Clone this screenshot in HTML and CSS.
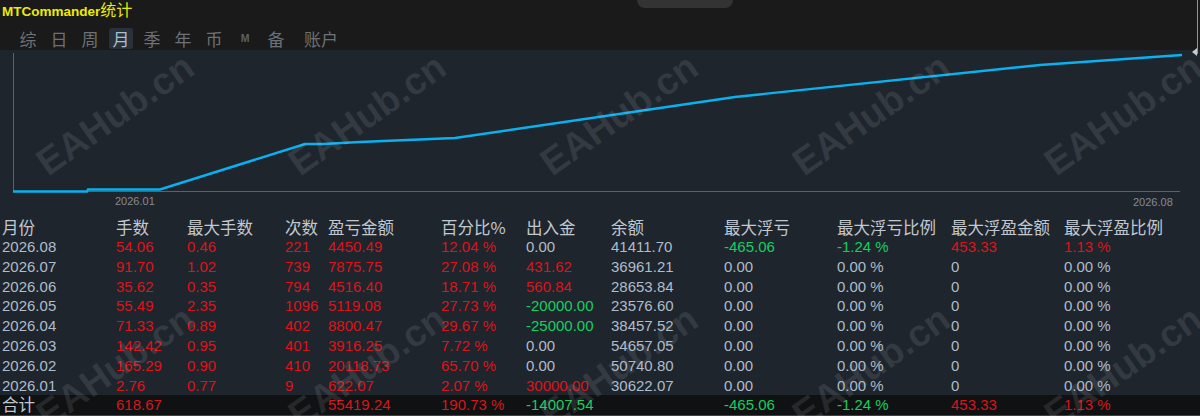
FILE: index.html
```html
<!DOCTYPE html>
<html>
<head>
<meta charset="utf-8">
<link rel="stylesheet" href="styles.css">
</head>
<body>
<div class="app">
  <div class="top">
    <div class="title">MTCommander<span class="cjk">统计</span></div>
    <div class="tabs">
      <span class="tab">综</span>
      <span class="tab">日</span>
      <span class="tab">周</span>
      <span class="tab active">月</span>
      <span class="tab">季</span>
      <span class="tab">年</span>
      <span class="tab">币</span>
      <span class="tab tab-m">M</span>
      <span class="tab">备</span>
      <span class="tab tab-wide">账户</span>
    </div>
  </div>
  <div class="chart">
    <svg class="chart-svg" width="1200" height="167" viewBox="0 50 1200 167">
      <line x1="13.5" y1="53" x2="13.5" y2="192" class="axis"/>
      <line x1="13" y1="191.5" x2="1180" y2="191.5" class="axis"/>
      <polyline class="curve" points="13,191.5 87,191.5 88,189.5 160,189.5 305,144 323,144 360,142 455,138 735,97 1040,65 1182,55"/>
      <text x="115" y="205" class="lbl">2026.01</text>
      <text x="1133" y="206" class="lbl">2026.08</text>
    </svg>
  </div>
  <div class="table">
    <div class="row head">
      <span>月份</span><span>手数</span><span>最大手数</span><span>次数</span><span>盈亏金额</span><span>百分比%</span><span>出入金</span><span>余额</span><span>最大浮亏</span><span>最大浮亏比例</span><span>最大浮盈金额</span><span>最大浮盈比例</span>
    </div>
    <div class="row">
      <span class="g">2026.08</span><span class="r">54.06</span><span class="r">0.46</span><span class="r">221</span><span class="r">4450.49</span><span class="r">12.04 %</span><span class="g">0.00</span><span class="g">41411.70</span><span class="gr">-465.06</span><span class="gr">-1.24 %</span><span class="r">453.33</span><span class="r">1.13 %</span>
    </div>
    <div class="row">
      <span class="g">2026.07</span><span class="r">91.70</span><span class="r">1.02</span><span class="r">739</span><span class="r">7875.75</span><span class="r">27.08 %</span><span class="r">431.62</span><span class="g">36961.21</span><span class="g">0.00</span><span class="g">0.00 %</span><span class="g">0</span><span class="g">0.00 %</span>
    </div>
    <div class="row">
      <span class="g">2026.06</span><span class="r">35.62</span><span class="r">0.35</span><span class="r">794</span><span class="r">4516.40</span><span class="r">18.71 %</span><span class="r">560.84</span><span class="g">28653.84</span><span class="g">0.00</span><span class="g">0.00 %</span><span class="g">0</span><span class="g">0.00 %</span>
    </div>
    <div class="row">
      <span class="g">2026.05</span><span class="r">55.49</span><span class="r">2.35</span><span class="r">1096</span><span class="r">5119.08</span><span class="r">27.73 %</span><span class="gr">-20000.00</span><span class="g">23576.60</span><span class="g">0.00</span><span class="g">0.00 %</span><span class="g">0</span><span class="g">0.00 %</span>
    </div>
    <div class="row">
      <span class="g">2026.04</span><span class="r">71.33</span><span class="r">0.89</span><span class="r">402</span><span class="r">8800.47</span><span class="r">29.67 %</span><span class="gr">-25000.00</span><span class="g">38457.52</span><span class="g">0.00</span><span class="g">0.00 %</span><span class="g">0</span><span class="g">0.00 %</span>
    </div>
    <div class="row">
      <span class="g">2026.03</span><span class="r">142.42</span><span class="r">0.95</span><span class="r">401</span><span class="r">3916.25</span><span class="r">7.72 %</span><span class="g">0.00</span><span class="g">54657.05</span><span class="g">0.00</span><span class="g">0.00 %</span><span class="g">0</span><span class="g">0.00 %</span>
    </div>
    <div class="row">
      <span class="g">2026.02</span><span class="r">165.29</span><span class="r">0.90</span><span class="r">410</span><span class="r">20118.73</span><span class="r">65.70 %</span><span class="g">0.00</span><span class="g">50740.80</span><span class="g">0.00</span><span class="g">0.00 %</span><span class="g">0</span><span class="g">0.00 %</span>
    </div>
    <div class="row">
      <span class="g">2026.01</span><span class="r">2.76</span><span class="r">0.77</span><span class="r">9</span><span class="r">622.07</span><span class="r">2.07 %</span><span class="r">30000.00</span><span class="g">30622.07</span><span class="g">0.00</span><span class="g">0.00 %</span><span class="g">0</span><span class="g">0.00 %</span>
    </div>
    <div class="row total">
      <span class="h">合计</span><span class="r">618.67</span><span></span><span></span><span class="r">55419.24</span><span class="r">190.73 %</span><span class="gr">-14007.54</span><span></span><span class="gr">-465.06</span><span class="gr">-1.24 %</span><span class="r">453.33</span><span class="r">1.13 %</span>
    </div>
  </div>

  <div class="notch"></div>
  <div class="scroll-line"></div>
  <div class="scroll-arrow"></div>

  <div class="wm-layer">
    <span class="wm w1">EAHub.cn</span>
    <span class="wm w2">EAHub.cn</span>
    <span class="wm w3">EAHub.cn</span>
    <span class="wm w4">EAHub.cn</span>
    <span class="wm w5">EAHub.cn</span>
    <span class="wm w6">EAHub.cn</span>
    <span class="wm w7">EAHub.cn</span>
    <span class="wm w8">EAHub.cn</span>
    <span class="wm w9">EAHub.cn</span>
    <span class="wm w10">EAHub.cn</span>
  </div>
</div>
</body>
</html>
```

FILE: styles.css
```css
html, body {
  margin: 0;
  padding: 0;
  background: #1f252d;
}
.app {
  position: relative;
  width: 1200px;
  height: 416px;
  overflow: hidden;
  font-family: "Liberation Sans", "Noto Sans CJK SC", sans-serif;
  background: #1f252d;
}
.top {
  height: 50px;
  background: #1a1a1a;
}
.title {
  padding-left: 2px;
  height: 18px;
  line-height: 18px;
  font-size: 13.5px;
  font-weight: bold;
  color: #ecec00;
  white-space: nowrap;
}
.title .cjk {
  font-family: "Noto Sans CJK SC", sans-serif;
  font-size: 16px;
  font-weight: normal;
}
.tabs {
  display: flex;
  gap: 7px;
  margin-top: 10px;
  padding-left: 16px;
  height: 21px;
}
.tab {
  min-width: 24px;
  height: 21px;
  line-height: 21px;
  text-align: center;
  font-family: "Noto Sans CJK SC", sans-serif;
  font-size: 17px;
  color: #6c7178;
  border-radius: 3px;
  box-sizing: border-box;
}
.tab.active {
  background: #29323c;
  color: #aebdcc;
}
.tab.tab-m {
  font-family: "Liberation Sans", sans-serif;
  font-size: 10.5px;
  font-weight: bold;
  color: #5c6168;
}
.tab.tab-wide {
  margin-left: 5px;
  padding: 0 4px;
}
.chart {
  height: 167px;
}
.chart-svg {
  display: block;
}
.axis {
  stroke: #5d6269;
  stroke-width: 1;
}
.curve {
  fill: none;
  stroke: #08b2f0;
  stroke-width: 2.4;
}
.lbl {
  font-family: "Liberation Sans", sans-serif;
  font-size: 11px;
  fill: #858b93;
}
.table {
  padding-left: 2px;
}
.row {
  display: grid;
  grid-template-columns: 114px 71px 98px 43px 113px 85px 85px 113px 113px 114px 113px 1fr;
  height: 19.8px;
  line-height: 19.8px;
  font-size: 15px;
  white-space: nowrap;
}
.row.head {
  height: 20px;
  line-height: 20px;
  font-family: "Noto Sans CJK SC", sans-serif;
  font-size: 16.5px;
  color: #c2c8cf;
}
.row.total {
  background: #0f1113;
  margin-left: -2px;
  padding-left: 2px;
  border-bottom: 1px solid #3b4046;
}
.g { color: #aebccb; }
.r { color: #dc1419; }
.gr { color: #12d060; }
.h {
  font-family: "Noto Sans CJK SC", sans-serif;
  font-size: 16.5px;
  color: #c2c8cf;
}
.notch {
  position: absolute;
  left: 637px;
  top: 0;
  width: 96px;
  height: 8px;
  background: #333333;
  border-radius: 0 0 9px 9px;
}
.scroll-line {
  position: absolute;
  left: 1197px;
  top: 0;
  width: 1px;
  height: 54px;
  background: #8d97a3;
}
.scroll-arrow {
  position: absolute;
  left: 1192px;
  top: 48px;
  width: 0;
  height: 0;
  border-top: 4px solid transparent;
  border-bottom: 4px solid transparent;
  border-right: 5px solid #c8ccd0;
}
.wm-layer {
  position: absolute;
  left: 0;
  top: 0;
  width: 1200px;
  height: 416px;
  overflow: hidden;
  pointer-events: none;
}
.wm {
  position: absolute;
  font-family: "Liberation Sans", sans-serif;
  font-weight: bold;
  font-size: 38px;
  line-height: 38px;
  color: rgba(200, 205, 210, 0.12);
  transform: rotate(-35deg);
  transform-origin: 0 32px;
  white-space: nowrap;
}
.w1 { left: 48px; top: 145px; }
.w2 { left: 300px; top: 145px; }
.w3 { left: 552px; top: 145px; }
.w4 { left: 804px; top: 145px; }
.w5 { left: 1056px; top: 145px; }
.w6 { left: 48px; top: 397px; }
.w7 { left: 300px; top: 397px; }
.w8 { left: 552px; top: 397px; }
.w9 { left: 804px; top: 397px; }
.w10 { left: 1056px; top: 397px; }
```
